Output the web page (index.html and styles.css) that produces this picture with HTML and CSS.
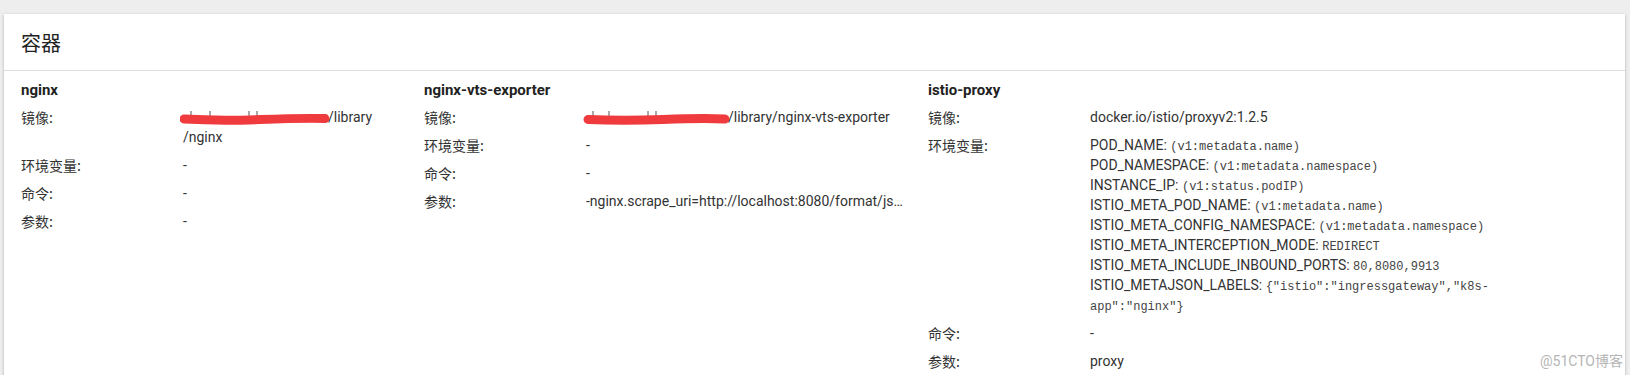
FILE: index.html
```html
<!DOCTYPE html>
<html lang="zh-CN">
<head>
  <meta charset="UTF-8" />
  <meta name="viewport" content="width=device-width, initial-scale=1.0"/>
  <title>容器</title>
  <link rel="stylesheet" href="styles.css">
</head>
<body>
  <div class="card">
    <div class="card-header">容器</div>

    <div class="card-body">
      <!-- nginx -->
      <div class="container-col col-nginx">
        <div class="container-name">nginx</div>
        <div class="label">镜像:</div>
        <div class="value">
          <svg class="redact" width="150" height="18" viewBox="0 0 150 18">
            <path d="M11 3v5M30 3v5M69 3v5M77 3v5" stroke="#555" stroke-width="1"/>
            <path d="M4 11 Q 40 13 80 11.5 T 145 10.5" stroke="#ef3b3d" stroke-width="9" stroke-linecap="round" fill="none"/>
          </svg>/library<br>/nginx
        </div>
        <div class="label">环境变量:</div>
        <div class="value">-</div>
        <div class="label">命令:</div>
        <div class="value">-</div>
        <div class="label">参数:</div>
        <div class="value">-</div>
      </div>

      <!-- nginx-vts-exporter -->
      <div class="container-col col-exporter">
        <div class="container-name">nginx-vts-exporter</div>
        <div class="label">镜像:</div>
        <div class="value">
          <svg class="redact" width="147" height="18" viewBox="0 0 147 18">
            <path d="M10 3v5M26 3v5M65 3v5M73 3v5" stroke="#555" stroke-width="1"/>
            <path d="M5 11.5 Q 40 13 80 11.5 T 142 11" stroke="#ef3b3d" stroke-width="9" stroke-linecap="round" fill="none"/>
          </svg>/library/nginx-vts-exporter
        </div>
        <div class="label">环境变量:</div>
        <div class="value">-</div>
        <div class="label">命令:</div>
        <div class="value">-</div>
        <div class="label">参数:</div>
        <div class="value truncate">-nginx.scrape_uri=http://localhost:8080/format/json</div>
      </div>

      <!-- istio-proxy -->
      <div class="container-col col-proxy">
        <div class="container-name">istio-proxy</div>
        <div class="label">镜像:</div>
        <div class="value">docker.io/istio/proxyv2:1.2.5</div>
        <div class="label">环境变量:</div>
        <div class="value env-list">
          <div>POD_NAME: <code>(v1:metadata.name)</code></div>
          <div>POD_NAMESPACE: <code>(v1:metadata.namespace)</code></div>
          <div>INSTANCE_IP: <code>(v1:status.podIP)</code></div>
          <div>ISTIO_META_POD_NAME: <code>(v1:metadata.name)</code></div>
          <div>ISTIO_META_CONFIG_NAMESPACE: <code>(v1:metadata.namespace)</code></div>
          <div>ISTIO_META_INTERCEPTION_MODE: <code>REDIRECT</code></div>
          <div>ISTIO_META_INCLUDE_INBOUND_PORTS: <code>80,8080,9913</code></div>
          <div>ISTIO_METAJSON_LABELS: <code>{"istio":"ingressgateway","k8s-app":"nginx"}</code></div>
        </div>
        <div class="label">命令:</div>
        <div class="value">-</div>
        <div class="label">参数:</div>
        <div class="value">proxy</div>
      </div>
    </div>

    <div class="watermark">@51CTO博客</div>
  </div>
</body>
</html>
```

FILE: styles.css
```css
body {
  font-family: Roboto, "Noto Sans CJK SC", sans-serif;
  font-size: 14px;
  color: #333;
  margin: 0;
  background-color: #eeeeee;
  overflow: hidden;
}
.card {
  position: relative;
  margin: 14px 5px 0 4px;
  height: 400px;
  background-color: #fff;
  box-shadow: 0 1px 3px rgba(0, 0, 0, 0.25);
}
.card-header {
  height: 56px;
  display: flex;
  align-items: center;
  padding-left: 17px;
  font-size: 20px;
  color: #222;
  border-bottom: 1px solid #dcdcdc;
}
.card-body {
  display: grid;
  grid-template-columns: 403px 504px 1fr;
  padding: 9px 17px 0;
}
.container-col {
  display: grid;
  grid-template-columns: 162px 1fr;
  row-gap: 8px;
  align-content: start;
  line-height: 20px;
}
.col-nginx .value { max-width: 205px; }
.col-exporter .value { max-width: 326px; }
.col-proxy .value { max-width: 410px; }
.container-name {
  grid-column: 1 / 3;
  font-size: 15px;
  font-weight: 700;
  color: #222;
  margin-bottom: -1px;
}
.label {
  font-family: "Noto Sans CJK SC", sans-serif;
  color: #333;
}
.value {
  color: #333;
}
.col-exporter .truncate {
  max-width: 318px;
  white-space: nowrap;
  overflow: hidden;
  text-overflow: ellipsis;
}
.redact {
  vertical-align: -4px;
  margin-left: -3px;
  margin-right: -2px;
}
.env-list div {
  line-height: 20px;
}
.env-list code {
  font-family: "Liberation Mono", monospace;
  font-size: 12px;
  line-height: 1;
  color: #444;
}
.watermark {
  position: absolute;
  right: 2px;
  top: 336px;
  font-size: 14px;
  color: #b5b5b5;
  text-shadow: 0 0 1px #fff;
}
```
